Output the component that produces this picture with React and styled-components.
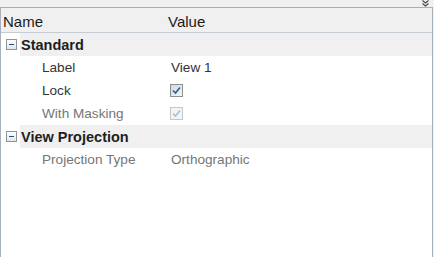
import styled, { createGlobalStyle } from "styled-components";

const GlobalStyle = createGlobalStyle`
  html, body {
    margin: 0;
    padding: 0;
    background: #ffffff;
  }
  body {
    font-family: "Liberation Sans", Arial, sans-serif;
    font-size: 14px;
  }
`;

const Panel = styled.div`
  width: 434px;
  height: 257px;
  display: flex;
  flex-direction: column;
  background: #f0f0f0;
`;

const TopStrip = styled.div`
  height: 7px;
  display: flex;
  justify-content: flex-end;
  padding-right: 5px;
`;

const Frame = styled.div`
  flex: 1;
  margin-right: 1px;
  border: 1px solid #a7b1bc;
  border-bottom: none;
  background: #ffffff;
  display: flex;
  flex-direction: column;
`;

const HeaderRow = styled.div`
  height: 24px;
  display: flex;
  align-items: flex-end;
  background: #f0f0f0;
  border-bottom: 1px solid #c5ccd3;
  color: #1a1a1a;
  font-size: 15px;
`;

const HeaderCell = styled.div`
  width: ${(p) => p.$width || "auto"};
  padding-left: ${(p) => p.$pad || 0}px;
  padding-bottom: 2px;
  line-height: 17px;
`;

const GroupRow = styled.div`
  height: 23px;
  display: flex;
  align-items: center;
`;

const Expander = styled.div`
  width: 19px;
  height: 100%;
  display: flex;
  align-items: center;
  padding-left: 5px;
  box-sizing: border-box;
`;

const MinusBox = styled.div`
  width: 9px;
  height: 9px;
  border: 1px solid #8f9499;
  background: linear-gradient(#ffffff, #e3e5e8);
  display: flex;
  align-items: center;
  justify-content: center;

  &::after {
    content: "";
    width: 5px;
    height: 1px;
    background: #1d4f91;
  }
`;

const GroupTitle = styled.div`
  flex: 1;
  height: 100%;
  display: flex;
  align-items: center;
  padding-left: 1px;
  background: #f0f0f0;
  font-weight: bold;
  color: #1e1e1e;
  font-size: 14.5px;
`;

const PropRow = styled.div`
  height: 23px;
  display: flex;
  align-items: center;
  font-size: 13.6px;
  color: ${(p) => (p.$disabled ? "#767676" : "#333333")};
`;

const PropName = styled.div`
  width: 168px;
  padding-left: 41px;
  box-sizing: border-box;
`;

const PropValue = styled.div`
  flex: 1;
  display: flex;
  align-items: center;
`;

const ValueText = styled.span`
  padding-left: 2px;
`;

const CheckBox = styled.div`
  width: 11px;
  height: 11px;
  border: 1px solid ${(p) => (p.$disabled ? "#c4c6c8" : "#8e8f8f")};
  background: ${(p) =>
    p.$disabled
      ? "linear-gradient(#f4f4f4, #f4f4f4)"
      : "linear-gradient(135deg, #d6d6d6, #f7f7f7)"};
  display: flex;
  align-items: center;
  justify-content: center;
  margin-left: 1px;
`;

const Chevron = () => (
  <svg width="7" height="7" viewBox="0 0 7 7">
    <polyline points="0.5,0.5 3.5,3 6.5,0.5" fill="none" stroke="#4a4a4a" strokeWidth="1.2" />
    <polyline points="0.5,3.5 3.5,6 6.5,3.5" fill="none" stroke="#4a4a4a" strokeWidth="1.2" />
  </svg>
);

const Check = ({ disabled }) => (
  <svg width="9" height="9" viewBox="0 0 9 9">
    <polyline
      points="1,4.5 3.5,7 8,1.5"
      fill="none"
      stroke={disabled ? "#9dc3dc" : "#22639c"}
      strokeWidth="1.6"
    />
  </svg>
);

const groups = [
  {
    title: "Standard",
    props: [
      { name: "Label", value: "View 1" },
      { name: "Lock", check: true },
      { name: "With Masking", check: true, disabled: true },
    ],
  },
  {
    title: "View Projection",
    props: [{ name: "Projection Type", value: "Orthographic", disabled: true }],
  },
];

const App = () => {
  return (
    <Panel>
      <GlobalStyle />
      <TopStrip>
        <Chevron />
      </TopStrip>
      <Frame>
        <HeaderRow>
          <HeaderCell $width="165px" $pad={2}>Name</HeaderCell>
          <HeaderCell>Value</HeaderCell>
        </HeaderRow>
        {groups.map((g) => (
          <div key={g.title}>
            <GroupRow>
              <Expander>
                <MinusBox />
              </Expander>
              <GroupTitle>{g.title}</GroupTitle>
            </GroupRow>
            {g.props.map((p) => (
              <PropRow key={p.name} $disabled={p.disabled}>
                <PropName>{p.name}</PropName>
                <PropValue>
                  {p.check ? (
                    <CheckBox $disabled={p.disabled}>
                      <Check disabled={p.disabled} />
                    </CheckBox>
                  ) : (
                    <ValueText>{p.value}</ValueText>
                  )}
                </PropValue>
              </PropRow>
            ))}
          </div>
        ))}
      </Frame>
    </Panel>
  );
};

export default App;
